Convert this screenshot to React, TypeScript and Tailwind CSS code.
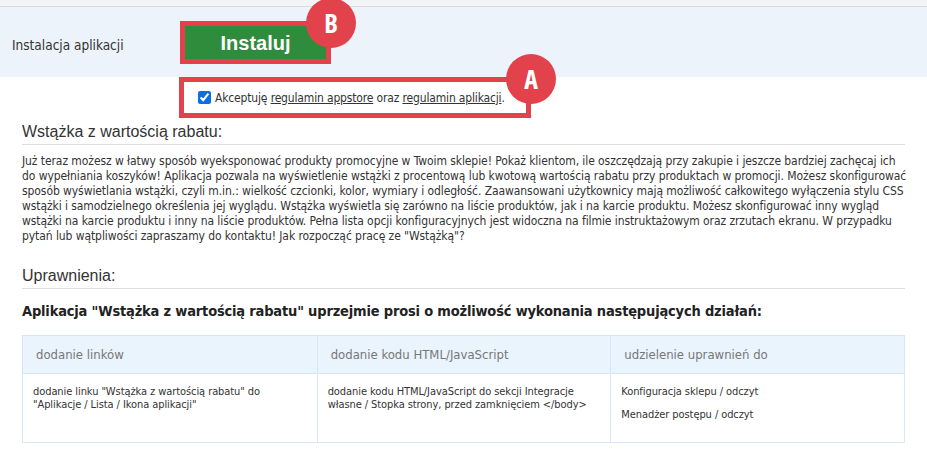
import type { ReactNode } from "react";

const font = { fontFamily: '"DejaVu Sans", Verdana, sans-serif', fontStretch: "condensed" as const };

function Badge({ letter, className }: { letter: string; className: string }) {
  return (
    <div
      className={`absolute w-[50px] h-[50px] rounded-full bg-[#e2424b] flex items-center justify-center text-white text-[26px] font-bold ${className}`}
      style={{ fontFamily: '"Open Sans", "Liberation Sans", sans-serif' }}
    >
      {letter}
    </div>
  );
}

function SectionTitle({ children }: { children: ReactNode }) {
  return (
    <h2
      className="text-[16px] font-normal text-[#333] pb-[2px] border-b border-[#dedede] leading-[20px] tracking-normal"
      style={{ fontFamily: '"Liberation Sans", Arial, sans-serif', fontStretch: "normal" }}
    >
      {children}
    </h2>
  );
}

// lines as they wrap in the original
const intro = [
  "Już teraz możesz w łatwy sposób wyeksponować produkty promocyjne w Twoim sklepie! Pokaż klientom, ile oszczędzają przy zakupie i jeszcze bardziej zachęcaj ich",
  "do wypełniania koszyków! Aplikacja pozwala na wyświetlenie wstążki z procentową lub kwotową wartością rabatu przy produktach w promocji. Możesz skonfigurować",
  "sposób wyświetlania wstążki, czyli m.in.: wielkość czcionki, kolor, wymiary i odległość. Zaawansowani użytkownicy mają możliwość całkowitego wyłączenia stylu CSS",
  "wstążki i samodzielnego określenia jej wyglądu. Wstążka wyświetla się zarówno na liście produktów, jak i na karcie produktu. Możesz skonfigurować inny wygląd",
  "wstążki na karcie produktu i inny na liście produktów. Pełna lista opcji konfiguracyjnych jest widoczna na filmie instruktażowym oraz zrzutach ekranu. W przypadku",
  'pytań lub wątpliwości zapraszamy do kontaktu! Jak rozpocząć pracę ze "Wstążką"?',
];

const perms = [
  {
    title: "dodanie linków",
    items: ['dodanie linku "Wstążka z wartością rabatu" do "Aplikacje / Lista / Ikona aplikacji"'],
  },
  {
    title: "dodanie kodu HTML/JavaScript",
    items: ["dodanie kodu HTML/JavaScript do sekcji Integracje własne / Stopka strony, przed zamknięciem </body>"],
  },
  {
    title: "udzielenie uprawnień do",
    items: ["Konfiguracja sklepu / odczyt", "Menadżer postępu / odczyt"],
  },
];

export default function App() {
  return (
    <div className="w-[927px] h-[455px] bg-white overflow-hidden text-[#333] tracking-[-0.08px]" style={font}>
      <div className="h-[6px] bg-[#f3f4f6] border-b border-[#dcdcdc] box-content" />
      <div className="h-[70px] bg-[#ecf3fa] flex items-center pl-[12px]">
        <span className="w-[168px] text-[13.5px] tracking-normal mt-[6px]">Instalacja aplikacji</span>
        <div className="relative mt-[1px]">
          <div className="border-[5px] border-[#e2424b] w-[151px] h-[43px]">
            <div
              className="h-full bg-[#2f8c3c] text-white text-[20px] font-bold tracking-normal flex items-center justify-center"
              style={{ fontFamily: '"Liberation Sans", Arial, sans-serif' }}
            >
              Instaluj
            </div>
          </div>
          <Badge letter="B" className="-top-[23px] left-[126px]" />
        </div>
      </div>
      <div className="px-[22px]">
        <div className="relative ml-[157px] w-[352px] h-[41px] border-[5px] border-[#e2424b] flex items-center pl-[14px] text-[12px] tracking-[-0.16px]">
          <input type="checkbox" defaultChecked className="w-[13px] h-[13px] mr-[4px] accent-[#0a6fe0]" />
          <span>
            Akceptuję <span className="underline">regulamin appstore</span> oraz{" "}
            <span className="underline">regulamin aplikacji</span>.
          </span>
          <Badge letter="A" className="-top-[28px] -right-[30px]" />
        </div>
        <div className="mt-[4px]">
          <SectionTitle>Wstążka z wartością rabatu:</SectionTitle>
        </div>
        <p className="mt-[9px] text-[12px] leading-[15px] text-[#333] whitespace-nowrap">
          {intro.map((line) => (
            <span key={line} className="block">
              {line}
            </span>
          ))}
        </p>
        <div className="mt-[22px]">
          <SectionTitle>Uprawnienia:</SectionTitle>
        </div>
        <h3 className="mt-[12px] text-[14.5px] font-bold text-[#222] tracking-[-0.18px]">
          Aplikacja "Wstążka z wartością rabatu" uprzejmie prosi o możliwość wykonania następujących działań:
        </h3>
        <div className="mt-[12px] grid grid-cols-3 border border-[#d5e7f6]">
          {perms.map((p, i) => (
            <div key={p.title} className={i > 0 ? "border-l border-[#d5e7f6]" : ""}>
              <div className="h-[38px] bg-[#eaf4fd] border-b border-[#d5e7f6] flex items-center px-[13px] text-[13px] tracking-normal text-[#777]">
                {p.title}
              </div>
              <div className="h-[68px] px-[10px] pt-[11px] text-[11px] leading-[13px] flex flex-col gap-[10px]">
                {p.items.map((t) => (
                  <div key={t}>{t}</div>
                ))}
              </div>
            </div>
          ))}
        </div>
      </div>
    </div>
  );
}
